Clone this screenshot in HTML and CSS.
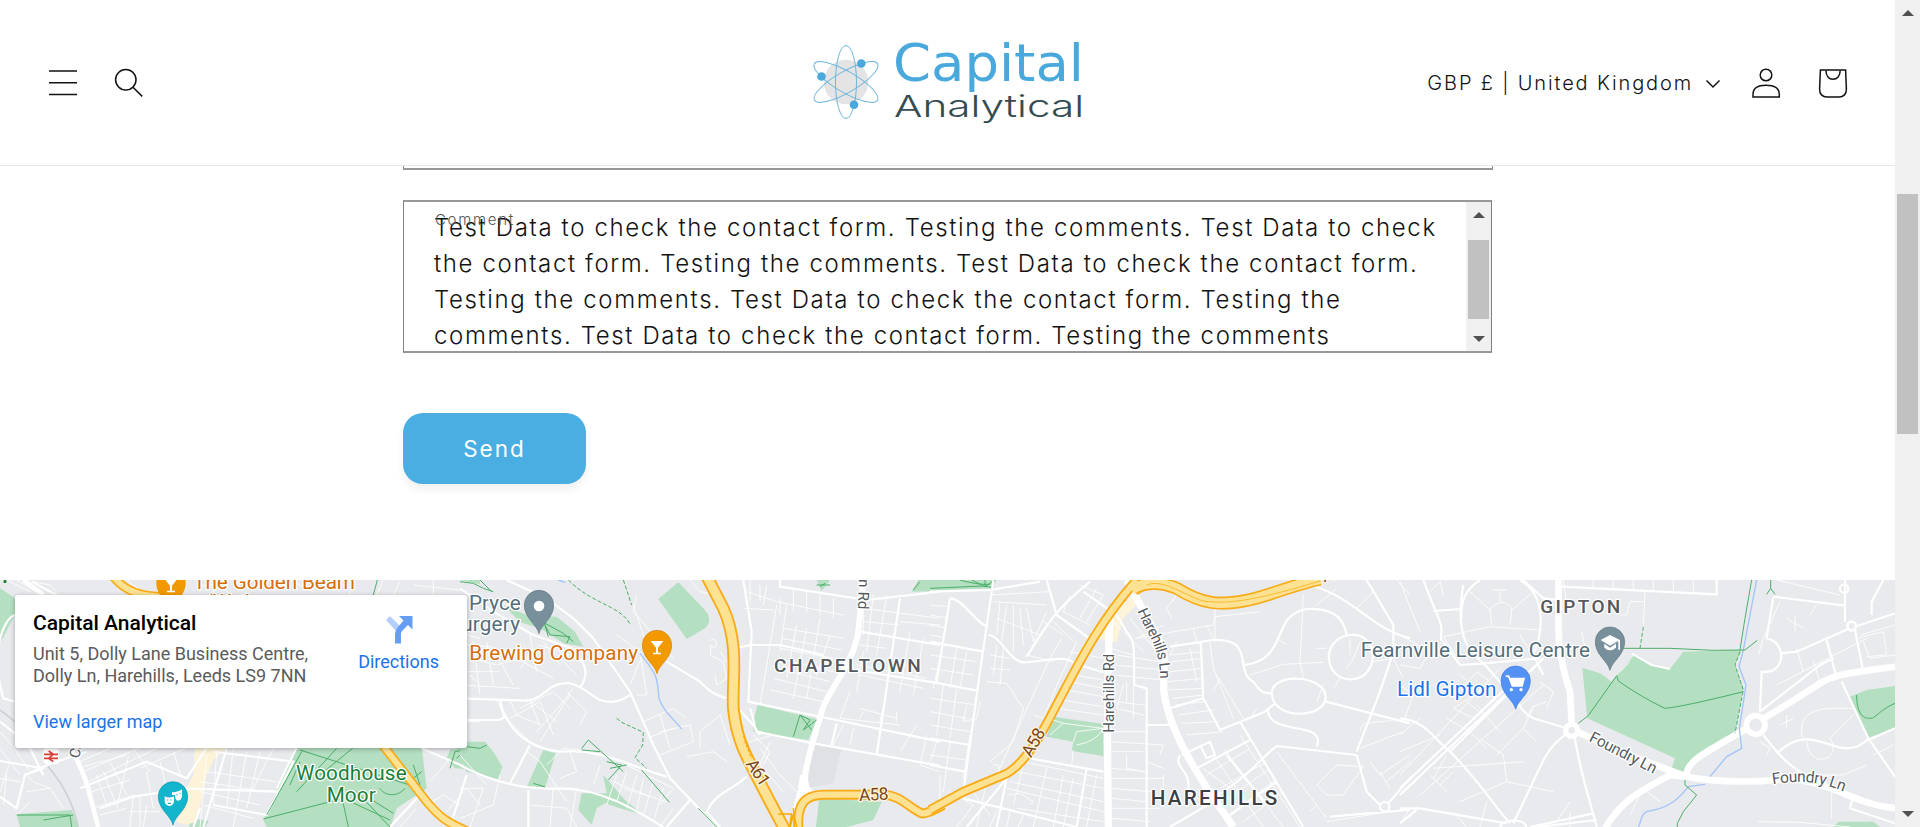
FILE: index.html
```html
<!DOCTYPE html>
<html lang="en">
<head>
<meta charset="utf-8">
<title>Capital Analytical – Contact</title>
<link rel="stylesheet" href="styles.css">
</head>
<body>
<div class="window">
<div class="page">
  <header class="header">
    <div class="header-left">
      <svg class="icon-menu" width="28" height="28" viewBox="0 0 28 28"><path d="M0 2h28M0 13.7h28M0 25.5h28"/></svg>
      <svg class="icon-search" width="30" height="30" viewBox="0 0 30 30"><circle cx="11.8" cy="11.8" r="10.2"/><path d="M19 19.2l9.2 9.2"/></svg>
    </div>
    <svg class="logo" width="280" height="90" viewBox="0 0 280 90">
      <circle cx="38" cy="44" r="22.3" fill="#e4e4e4"/>
      <g fill="none" stroke="#6db6dc" stroke-width="1">
        <ellipse cx="38" cy="44" rx="10.5" ry="36.5"/>
        <ellipse cx="38" cy="44" rx="10.5" ry="36.5" transform="rotate(60 38 44)"/>
        <ellipse cx="38" cy="44" rx="10.5" ry="36.5" transform="rotate(-60 38 44)"/>
      </g>
      <g fill="#49a9dc"><circle cx="53.3" cy="25.5" r="4.3"/><circle cx="13.5" cy="38.5" r="4.3"/><circle cx="46" cy="66.700" r="4.3"/></g>
      <text class="logo-top" x="85" y="43" textLength="191" lengthAdjust="spacingAndGlyphs">Capital</text>
      <text class="logo-bottom" x="86" y="79" textLength="190" lengthAdjust="spacingAndGlyphs">Analytical</text>
    </svg>
    <div class="header-right">
      <span class="currency">GBP £ | United Kingdom</span>
      <svg class="icon-chevron" width="16" height="10" viewBox="0 0 16 10"><path d="M1.5 1.5L8 8l6.5-6.5"/></svg>
      <svg class="icon-account" width="30" height="32" viewBox="0 0 30 32"><circle cx="15" cy="8" r="5.8"/><path d="M2 30V27.5C2 21.500 6 18.300 15 18.300S28.300 21.500 28.300 27.500V30Z"/></svg>
      <svg class="icon-bag" width="30" height="32" viewBox="0 0 30 32"><path d="M2.400 3H27.600L28.400 22C28.600 27 25.500 30 21 30H9C4.500 30 1.400 27 1.600 22Z"/><path d="M8 3.500C8 9 11 12.200 15 12.200S22.200 9 22.200 3.500"/></svg>
    </div>
  </header>
  <main class="contact">
    <div class="field-end"></div>
    <div class="field">
      <span class="field-label">Comment</span>
      <div class="field-text">
        <div>Test Data to check the contact form. Testing the comments. Test Data to check</div>
        <div>the contact form. Testing the comments. Test Data to check the contact form.</div>
        <div>Testing the comments. Test Data to check the contact form. Testing the</div>
        <div>comments. Test Data to check the contact form. Testing the comments</div>
      </div>
      <div class="bar field-bar"><i class="up"></i><i class="thumb"></i><i class="down"></i></div>
    </div>
    <button class="send">Send</button>
  </main>
  <section class="map">
    <svg class="map-canvas" width="1895" height="247" viewBox="0 580 1895 247">
      <defs>
        <path id="pin" d="M0 86C-6 58-44 40-44 0A44 44 0 1 1 44 0C44 40 6 58 0 86Z"/>
        <path id="glass" d="M-19-16H19L3 4V19H12V24H-12V19H-3V4Z" fill="#fff"/>
      </defs>
      <!-- west -->
      <g transform="translate(0 575) scale(.33333)">
        <path class="park" d="M0 40L45 70V120L0 205ZM890 515H1265L1280 640L1190 700L1172 756H800L790 735L835 640ZM50 718L215 705L235 756H60ZM1350 525L1440 505V585L1365 580L1340 550ZM570 730L627 738L615 756H568ZM1380 15H1440V28Z"/>
        <path class="shop" d="M585 518H680L640 555L620 600L590 740L555 750L530 740L550 660L580 600Z"/>
        <path class="mn" d="M0 470L40 515L90 590M0 520L60 600M30 560L0 650M240 560L330 520M250 590L420 518M265 620L470 520M275 650L390 615M385 545L350 700M330 560L380 660M400 520L450 590M420 580L560 518M440 590L460 700M480 560L500 640M520 530L545 610M250 575L380 540M290 600L320 690M310 590L345 680M280 700L400 660M300 720L380 700M620 540L600 756M650 530L640 690M700 520L680 700M740 530L700 756M780 530L740 700M820 520L760 640M600 620L800 650M600 650L780 690M610 690L760 730M620 590L830 620M0 610L60 620M20 600L10 690M70 590L100 620L150 640L190 700M80 650L150 640M90 680L50 720M400 660L390 756M420 665V756M440 690L430 756M390 710H480M1290 620L1350 550M1280 690L1330 660L1380 690M1340 710L1400 640L1440 690M1250 700L1200 756M20 15L90 50M50 15L110 50M100 20L150 30L170 50M380 15L420 45M600 30H660M680 15V55M880 20L940 50M1050 20V60M1150 15L1130 60M1200 20L1180 60M1300 15V60M1240 30L1380 45M1400 180L1440 190M1410 300L1440 330M1400 440H1440"/>
        <path d="M0 405L45 440M130 560C190 620 220 690 235 756" fill="none" stroke="#cdd0d4" stroke-width="5"/>
        <path class="rd" d="M45 380L10 370C-30 230 10 130 45 120M0 440L45 475L90 520L130 600M0 558L130 580L75 600L50 700L0 665M75 600L155 565L260 530M95 20L170 60M240 640L440 560L560 610L620 518M300 700L400 665L560 640L830 650M640 530L880 560L800 720L640 690M830 640L890 518M1265 520L1440 595M1400 600L1350 756M1170 756L1260 660M600 700L580 756M680 520L610 756"/>
        <path class="mj" d="M70 15L130 60M215 530C260 590 275 690 295 756"/>
        <path class="path" d="M900 525L1260 640M905 530L800 720M890 650L1010 520M900 560L870 630M1020 640L1045 756M1070 650L1170 756M1140 640C1150 660 1190 670 1215 640M1100 665L1180 715M1240 570L1260 630M1265 590L1240 610M790 732L1030 670L1170 735M1060 518L960 600M50 720H210L215 756M130 735L220 720M1120 60L1132 15M1350 580L1365 530L1440 515M1370 550L1410 510"/>
        <path class="oc" d="M340 5C380 55 430 62 480 65M1140 500L1280 680C1325 735 1350 745 1405 770"/><path class="oy" d="M340 5C380 55 430 62 480 65M1140 500L1280 680C1325 735 1350 745 1405 770"/>
        <rect x="130" y="520" width="46" height="48" rx="8" fill="#fff"/><path d="M132 538H174M132 550H174M146 528L160 538L146 550L160 560" fill="none" stroke="#d93f36" stroke-width="5"/>
        <text class="street" transform="translate(236 552) rotate(-75)" font-size="44">Ca</text>
        <path d="M15 15V24" stroke="#188038" stroke-width="8"/>
        <use href="#pin" x="513" y="24" fill="#f29900"/><use href="#glass" x="513" y="28"/>
        <g fill="#d56e0c"><text x="580" y="41" font-size="62" textLength="485">The Golden Beam</text><text x="620" y="103" font-size="62" textLength="225">(Wethers</text></g>
        <g fill="#188038"><text x="888" y="614" font-size="62" textLength="332">Woodhouse</text><text x="980" y="680" font-size="62" textLength="147">Moor</text></g>
        <use href="#pin" x="519" y="664" fill="#12b5cb" stroke="#0f95a8" stroke-width="2"/>
        <path fill="#fff" d="M494 664Q507 671 522 664V680Q518 693 508 693Q497 691 494 680ZM516 651Q532 654 546 643V662Q545 675 534 677Q525 677 525 660L516 660Z"/><path d="M501 675h4M511 675h4M529 659h4M539 656h3M503 684q5 4 10 0" stroke="#12b5cb" stroke-width="3"/>
      </g>
      <!-- north west -->
      <g transform="translate(460 575) scale(.33333)">
        <path class="park" d="M595 72L655 22L735 105Q760 135 735 160L680 192ZM892 390L1072 432L1045 495L880 470V440ZM130 90L200 120L290 125L345 170L370 215L310 205L250 165L180 140ZM0 500H75L100 530L127 575L115 612L20 590L0 550ZM250 525L287 535L255 638L202 632ZM430 600L495 675L550 720L480 700L435 685L410 700L395 750L355 705L365 655L440 655ZM1078 670L1170 675L1265 680L1240 735L1160 756H1068ZM1070 15H1110L1085 48ZM1375 15H1440V48L1355 50Z"/>
        <path d="M1060 510L1145 518L1120 625L1040 640Z" fill="#dfe1e5"/>
        <path class="mn" d="M20 210L90 215L130 230M30 250L110 270L180 250M20 290H120M40 200L60 360M80 200L100 330M110 240L160 330M0 330L180 340M150 220L200 250L260 215M210 180L230 290M250 200L300 270M170 250L280 310M180 280L240 210L330 240M280 230L350 300M110 375L150 440L210 500M150 375L170 420L240 450L210 380M200 370L290 440M180 400L280 350L330 400M150 430L240 380L280 480M230 470L310 380L340 340M240 500L330 360M320 350L380 410L360 450M520 90L560 210L510 330M470 180L540 230L560 360L530 360M550 440L640 400L680 430M600 420L630 520M600 540L700 500L690 450L600 470M560 490L640 460M680 545L760 530L800 560M720 520V470L780 420L810 510M530 60L520 110L640 250M750 200C750 190 770 190 770 205S755 220 752 210V240L790 260L800 310L770 330L765 300M800 260L780 230M690 15L720 50L780 60M900 390L910 330L950 90M860 50L950 80L1150 120M870 15V80M900 30V80M920 30L910 90M850 100L940 105M960 70V120M1000 40V110M1040 50V110M1080 60V120M1120 70V130M970 160L1150 190M965 190L1145 225M960 220L1120 250M955 250L1120 290M950 280L1110 320M940 310L1100 350M930 345L1090 380M980 90L960 230M1010 150L980 310M1040 160L1000 370M1080 130L1040 370M1110 180L1070 300M1210 60V180M1240 60L1220 230M1280 60L1250 240M1320 140L1440 150M1210 100L1440 130M1210 140L1320 150M1200 210L1280 220M1190 270L1400 310M1200 300L1390 340M1170 350L1140 430L1320 450M1210 230L1190 350M1350 170L1320 350M1390 190L1360 360M1200 400L1310 430M1210 410L1200 430M1270 400L1260 440M1310 410V440M1150 450L1120 510M1180 460L1170 510M1370 450L1320 530M1400 480L1380 570L1440 590M870 500L940 480M900 520L960 600L1010 650M930 500L900 570L970 650M880 480L930 530L910 570M460 620L560 660M470 600L440 690M500 590L470 680M530 600L500 700M550 610L530 710M580 620L550 720M610 640L580 740M500 570L640 640L600 690M490 640L620 680M640 700L600 756M400 530L310 520L260 570M330 530L350 590L300 610M420 570L400 630M0 640L70 640L30 756M120 600L100 690L0 730M210 690L320 700L350 756M280 640L270 756M350 640L330 756M200 530L240 560L320 680M0 540L80 630"/>
        <path class="rd" d="M0 370L200 377C260 370 260 320 330 325C400 345 400 385 460 380C500 375 500 360 515 360M0 435H115C140 430 130 420 120 375M120 390C150 470 210 520 300 530C420 520 500 570 620 605M210 510L150 625M205 645V756M0 570C100 625 200 645 300 640C420 640 520 700 610 756M140 15L260 70L340 130L400 190L510 350L580 510L630 610L770 756M340 240C400 270 370 330 360 335M0 40L100 110L220 180L350 225M620 260L720 320C760 360 770 360 800 370M835 218L870 210H960L1090 240M850 15L875 170L865 380L1440 500M960 15V35L1220 75L1440 50M870 400C890 450 880 460 890 470L1060 505L1440 572M1200 170L1440 210M1180 285L1440 325M1320 70L1250 540M1130 445L1115 510M740 710C770 650 810 650 860 605M740 710L780 756M690 675L620 756M830 395L880 450L900 480"/>
        <path class="mj" style="stroke-width:18" d="M1210 15L1195 170C1180 270 1100 350 1085 410C1070 460 1050 520 1035 600L1000 730"/>
        <path d="M1020 600L1045 600Q1040 650 1080 655L1020 690L1000 735Z" fill="#fff"/>
        <path class="water" d="M295 15L315 22M540 235C600 310 590 310 597 370C610 410 640 430 665 462"/>
        <path class="path" d="M0 20L40 25L70 40L100 50M60 15L95 50M250 140L270 180L330 185L320 205M255 145L310 175L340 200M265 185L255 150M365 520L385 495L490 590M365 525L420 530M440 560L485 570L445 615M450 580L500 570M545 585L628 682M715 700L770 756M220 625L255 636M20 515L60 520L80 510M1000 485L1020 420L1055 465M1020 420L1050 435L1030 465L1070 435M1070 30H1110M1080 35L1095 25M1360 45L1380 20M930 650L955 692"/>
        <path class="path dash" d="M325 15C400 90 480 90 512 150M490 15L515 90M470 430L485 442L550 472L548 510L525 548L560 580"/>
        <path class="oc" style="stroke-width:38" d="M738 0L790 100C840 210 815 320 820 400C830 500 850 530 975 765"/><path class="oy" style="stroke-width:27" d="M738 0L790 100C840 210 815 320 820 400C830 500 850 530 975 765"/>
        <path class="oc" style="stroke-width:30" d="M1015 760C1010 680 1040 660 1090 659H1270C1320 660 1350 700 1385 715C1400 717 1420 705 1450 690"/><path class="oy" style="stroke-width:19" d="M1015 760C1010 680 1040 660 1090 659H1270C1320 660 1350 700 1385 715C1400 717 1420 705 1450 690"/>
        <path d="M835 400L855 500L875 550" fill="none" stroke="#f9ab00" stroke-width="4" stroke-dasharray="10 4"/>
        <path d="M955 717H995L990 750M1000 720L990 756M1000 700C1000 730 1010 750 1010 756" fill="none" stroke="#f9ab00" stroke-width="5"/>
        <use href="#pin" x="237" y="90" fill="#78909c" stroke="#60757f" stroke-width="2"/><circle cx="237" cy="93" r="16" fill="#fff"/>
        <use href="#pin" x="591" y="210" fill="#f29900" stroke="#d58100" stroke-width="2"/><use href="#glass" x="591" y="214"/>
        <g fill="#546e7a"><text x="27" y="104" font-size="62" textLength="155">Pryce</text><text x="-34" y="168" font-size="62" textLength="214">Surgery</text></g>
        <text x="28" y="254" font-size="62" fill="#d56e0c" textLength="506">Brewing Company</text>
        <text class="area" x="942" y="291" textLength="440">CHAPELTOWN</text>
        <text class="street" transform="translate(1197 12) rotate(92)" font-size="45" textLength="91">n Rd</text>
        <text class="route" transform="translate(856 567) rotate(56)" textLength="85">A61</text>
        <text class="route" transform="translate(1198 678) rotate(-3)" textLength="88">A58</text>
      </g>
      <!-- harehills -->
      <g transform="translate(930 575) scale(.33333)">
        <path class="park" d="M0 15H200L185 40L0 47ZM370 425L520 447V543L425 528L430 500L350 485Z"/><path class="path" d="M0 40L160 33L190 38M125 15L165 35L195 15M165 15V35M90 15Q140 30 180 28"/><path class="shop" d="M525 110L545 105L610 60L625 85L580 130L560 200L490 190L470 230L455 215Z"/>
        <path class="mn" d="M0 90L60 95M0 120L50 128M0 150L45 158M0 180L45 188M0 240L140 260M0 280L130 300M30 250L10 340M80 220L60 340M110 230L90 340M0 370L140 390M0 410L110 430M40 330L20 480M80 340L60 490M110 390L100 440L140 430L150 380M0 450L120 470M20 500L0 560M60 500L40 650M120 480L100 610M0 540L110 555M30 600V680L0 690M180 60L360 50M190 80L350 90M210 80L200 180M230 90L215 200M250 90V230M270 100L280 210M290 100L310 200M200 130L330 180M350 110L310 200M340 140L400 180M360 130L430 200M290 240L370 260M420 60L400 110L480 150M450 30L520 60L470 140M500 40L450 130M395 190L360 250L200 600M440 200L390 310L340 430L310 420M200 210L190 300M220 220L210 330M180 240L240 250M180 280L240 285M170 320L230 325L280 400L250 500L180 560M190 570C220 560 200 600 220 610M420 230L520 250M430 300L520 315M420 320L520 340M410 345L520 365M395 375L520 395M380 400L520 420M540 180V220L610 240M550 140L640 230M600 130L680 230M620 190L700 150M560 240L690 260M550 270L700 285M550 300L700 315M580 330L560 400L640 420M610 330V430M590 320V380M550 380L645 390M545 470H650M545 500L700 510L690 540M545 530H640M590 540V580L640 590M545 580L650 590M545 610H700M545 640L660 650M545 670L650 680M545 700H690M545 730L660 740M700 600V640M650 560L700 580M720 240L820 230M725 260L820 250M720 290L820 280M710 320L820 310M715 345L820 340M730 370L820 360M735 390L830 380M745 420L850 405M755 445L865 440M770 480L880 470M840 200L850 280L910 430M860 300L940 430M870 310L850 350M780 220L800 320M740 200L720 240M615 190L850 150L855 125L990 110M855 95V200M790 160L800 200M830 150L850 190M740 60L710 100L725 130M280 560L520 610M260 590L520 640M240 620L520 680M230 640L520 710M280 570L250 690M350 580L310 756M400 600L370 756M430 610L400 756M500 600L470 756M230 660L270 655L310 680L300 690M260 700L520 740M200 710L180 756M240 710L230 756M280 720L265 756M60 650L130 690L80 756M120 640L180 720M170 620L140 756M820 580L900 640M850 540L1000 756M880 520L1060 756M930 480L1110 756M870 640L1010 560M880 680L1020 580M900 720L1040 610M940 740L1060 650M830 600L960 520M1040 530L1190 730M1160 630L1220 570L1300 575L1240 660L1190 660ZM980 400L960 430M1120 60L1110 260L1120 310M1040 190L1070 210M1190 220H1160M1290 200L1270 250L1250 280M1260 190V240M1180 330L1160 380M1230 310L1210 340M1330 260L1390 250L1420 310M1400 15L1440 60M1290 470C1290 430 1350 450 1400 430M1290 520L1420 470M1280 100L1330 50M1160 90L1220 40M960 300L1060 268L1180 262M1140 710L1160 690M1190 740L1440 700M1320 560L1350 600L1440 540M1370 620L1440 560M1350 590L1380 640"/>
        <path class="rd" d="M0 50L180 45L330 20M60 70L20 320M60 70C100 70 140 150 175 155M190 15L150 290L100 650M0 200L160 230M0 320L140 347M0 490L120 510M0 570L105 590M175 180C210 180 240 260 280 262C340 260 400 240 430 262M350 15L380 120L485 195M290 245C350 150 370 110 480 20M460 50L560 120L590 170C620 200 610 240 613 330L650 340V756M430 265L520 292M720 215L850 195C980 190 910 290 970 320C990 350 1000 355 1025 355M1000 355M945 270C1080 250 1020 120 1130 102C1200 100 1240 120 1250 180M1025 355C1025 290 1185 300 1187 365C1190 430 1030 440 1025 355M1188 380L1440 445M1260 180C1350 170 1350 310 1265 313C1180 315 1170 190 1260 180M1140 30C1280 70 1320 160 1440 190M1310 15L1390 150V230L1350 350L1280 530M1035 385L1005 410L870 465L820 370L812 200M1015 405C1010 470 1150 450 1160 485C1170 490 1160 510 1162 515M1280 540L1040 513C1000 540 950 620 810 690M1280 540L1310 650L1350 690M1200 725C1260 720 1300 715 1440 705M720 400L820 370M650 450H720M750 540C730 580 780 580 775 640M755 540L840 500L855 540L830 550L810 510M800 580L960 495M890 540L1010 690M930 440L1120 756M900 720L1040 620M720 756L850 680M100 670L440 756M90 650L230 610L200 756M300 550L520 590M230 610L110 756M470 580L440 756M1350 695A14 14 0 1 1 1378 695A14 14 0 1 1 1350 695M1375 685L1440 610"/>
        <path class="mj" style="stroke-width:22" d="M540 130C530 300 532 500 535 756M590 15L620 70L690 200C720 260 690 310 705 370C730 500 830 640 910 756"/>
        <path class="oc" style="stroke-width:29" d="M620 15C490 160 430 300 345 455C300 540 250 590 220 600L100 650L0 705"/><path class="oc" style="stroke-width:39" d="M610 45C640 20 690 20 740 40C820 90 870 90 940 78C1000 70 1070 35 1170 12"/>
        <path class="oy" style="stroke-width:18" d="M620 15C490 160 430 300 345 455C300 540 250 590 220 600L100 650L0 705"/><path class="oy" d="M605 45C640 20 690 20 740 40C820 90 870 90 940 78C1000 70 1070 35 1170 12" style="stroke-width:29"/>
        <path d="M650 30C700 10 760 60 820 78C900 90 1000 70 1170 18" fill="none" stroke="#f9bb2d" stroke-width="3"/>
        <path class="mn" d="M360 480L400 445L520 460M370 435L400 445M430 500L440 470L520 460M440 510Q500 500 520 460M430 525L425 570"/>
        <text class="street" transform="translate(553 473) rotate(-90)" font-size="45" textLength="237">Harehills Rd</text>
        <path id="lane" d="M622 108C660 195 690 215 690 318" fill="none"/><text class="street" font-size="45"><textPath href="#lane" textLength="217">Harehills Ln</textPath></text>
        <text class="route" transform="translate(303 550) rotate(-60)" textLength="90">A58</text>
        <text class="route" transform="translate(1182 22) rotate(-16)">A58</text>
        <text class="area town" x="662" y="689" textLength="380">HAREHILLS</text>
      </g>
      <!-- gipton -->
      <g transform="translate(1400 575) scale(.33333)">
        <path class="park" d="M547 278L600 295L635 320L705 238L755 270L810 282L850 230L1025 225L1005 270L1030 340L1005 475L900 535L850 590H812L825 550L562 430ZM1350 365L1400 345L1485 333V460L1405 488ZM1315 740H1420L1440 756H1300Z"/>
        <path class="mn" d="M0 20L60 170M90 50L120 20L130 60M210 50L270 105L275 150M330 150L335 105L400 50M270 105C290 75 325 75 335 105M300 50V85M275 45H320M130 185L270 155L415 165M130 185L180 260M360 180L410 260M180 300L240 350L160 400L220 430L290 360M160 370L230 290L270 320M200 380L250 420M140 430L210 470L260 520M0 480L60 430M0 530L120 480M0 600L300 280M60 660L430 330M100 580L370 560M140 540L100 610M160 590L120 630M90 600L140 650M180 680L320 620L460 650M320 620L310 540L240 490M230 390L300 470M290 540L370 460L400 400M440 400L460 350L420 320M370 460L410 500M400 395L440 380M380 430L400 390M490 15L500 90M545 170L555 220M580 15V40M640 15V45M700 15V45M760 15V50M820 15V50M880 15V50M735 50L730 155M660 120H680L690 80H730M1130 15L1320 60M1140 80L1090 190L1075 240M1160 130L1210 160M1185 120V170M1250 90L1230 120M1190 220L1210 290M1130 330L1400 190M1240 260L1260 320M1380 180L1485 150M1390 200L1410 250L1485 240M1210 500C1180 390 1280 400 1360 400M1220 500C1230 590 1330 550 1290 490L1360 420M1140 450L1180 430M1160 420V460M1420 540L1480 510M1180 600L1330 600L1400 570M1295 640V730M1075 740L1200 742L1350 756M660 290L690 260M740 650L780 680M720 660L690 720M30 700L0 750M160 710L200 756M260 680L240 756M510 710V756M470 740L510 680M0 180L90 230L60 280L0 270M0 330L40 360L10 440M0 645L80 560M1370 190L1450 170L1460 240L1400 245M1080 500L1110 520L1100 540"/>
        <path class="rd" d="M70 15C120 150 130 140 122 190L180 270L250 265M190 30C160 200 220 240 250 265L300 320C370 390 350 400 400 430L500 460M240 15C200 40 180 80 185 130M360 15C440 60 430 170 400 240L430 300M100 108L185 102M370 15L430 70L480 75M0 430C80 440 90 480 150 530C240 620 280 690 330 745M0 640L370 290M0 660L430 250M150 530L430 250M250 265L420 250M500 475C430 530 440 540 340 745M300 756C310 730 370 730 380 756M0 700H60L320 745M0 745L50 705M525 490C540 590 560 640 590 756M390 756L580 715M410 756L590 735M485 35L950 58V15M695 235L755 270L810 282M1120 65L1100 190C1160 200 1160 300 1085 290L1080 410M1120 65L1335 92M1335 15V140M1415 120V80L1450 15M1140 235L1190 230L1350 160L1485 115M1365 165L1390 290M1280 195L1310 310M1325 320L1405 490L1485 605M1405 495L1485 460M1080 410L1260 270L1300 250M1090 480C1150 560 1200 600 1260 620M1130 535C1220 450 1280 520 1340 520C1380 520 1390 500 1410 490M1360 660L1350 700L1485 745M1320 40A11 11 0 1 1 1345 42A11 11 0 1 1 1320 40"/>
        <path class="mj" style="stroke-width:20" d="M475 15C480 130 460 200 510 350L515 450M530 470L700 545L860 605C970 625 1080 620 1130 615C1280 600 1350 690 1490 700M860 600C860 560 900 540 1060 450L1190 370C1300 300 1280 300 1490 275M860 605L810 600C720 650 670 670 615 760"/>
        <circle cx="515" cy="466" r="18" class="ring" style="stroke-width:16"/><circle cx="1067" cy="450" r="28" class="ring" style="stroke-width:17"/><circle cx="1355" cy="153" r="13" class="ring" style="stroke-width:8"/>
        <path class="water" d="M1070 15L1030 225L1017 275L1038 330L1018 460L1025 520L980 545L930 605M915 628L865 635C830 680 800 700 740 710C720 720 725 740 715 756"/>
        <path class="path" d="M1055 15L1035 130L1020 225M670 220H810L940 226L1035 225L1072 196M535 445L565 422L650 302L655 318Q730 370 795 400Q850 395 1030 350M1112 15V40L1100 58M1112 40L1125 58M855 615V630L890 660L850 710L832 745V756M1370 360C1370 430 1400 430 1410 430C1430 430 1430 410 1485 385"/>
        <path class="path dash" d="M730 156L720 220M1020 230L1005 270L1030 345L1005 475"/>
        <use href="#pin" x="630" y="200" fill="#78909c" stroke="#60757f" stroke-width="2"/><path fill="#fff" d="M630 180L602 195L630 212L655 198V224H660V195ZM613 206V218Q630 234 648 218V206L630 218Z"/>
        <use href="#pin" x="347" y="317" fill="#5491f5" stroke="#427fdf" stroke-width="2"/><path d="M317 303H326L337 333H366L372 311H330" fill="#fff" stroke="#fff" stroke-width="5"/><circle cx="334" cy="344" r="5" fill="#fff"/><circle cx="363" cy="344" r="5" fill="#fff"/>
        <text class="area" x="421" y="113" textLength="240">GIPTON</text>
        <text x="-118" y="246" font-size="62" fill="#546e7a" textLength="688">Fearnville Leisure Centre</text>
        <text x="-9" y="362" font-size="62" fill="#1a73e8" textLength="298">Lidl Gipton</text>
        <text class="street" transform="translate(565 497) rotate(27)" font-size="47" textLength="220">Foundry Ln</text>
        <path id="foundry" d="M1118 628C1200 616 1250 615 1345 655" fill="none"/><text class="street" font-size="47"><textPath href="#foundry" textLength="218">Foundry Ln</textPath></text>
      </g>
    </svg>
    <div class="place">
      <div class="place-info">
        <h2>Capital Analytical</h2>
        <p>Unit 5, Dolly Lane Business Centre,<br>Dolly Ln, Harehills, Leeds LS9 7NN</p>
        <a>View larger map</a>
      </div>
      <div class="directions">
        <svg width="28" height="28" viewBox="0 0 28 28"><path d="M1 4L5 0L15 10L11 15Z" fill="#b5cefb"/><path d="M14 0H27.500V13.500L23 9L17 15Q16 16.500 16 18V27.500H10V18Q10 14 13 11L18.500 4.500Z" fill="#669df6"/></svg>
        <span>Directions</span>
      </div>
    </div>
  </section>
</div>
<div class="bar page-bar"><i class="up"></i><i class="thumb"></i><i class="down"></i></div>
</div>
</body>
</html>
```
FILE: styles.css
```css
* { box-sizing: border-box; }
body { margin: 0; background: #fff; color: #121212; font-family: Inter, "Open Sans", sans-serif; overflow: hidden; }
.window { display: flex; width: 1920px; height: 827px; }
.page { width: 1895px; display: flex; flex-direction: column; }

.header { height: 166px; flex: none; display: grid; grid-template-columns: 1fr 280px 1fr; align-items: center; border-bottom: 1px solid #e8e8e8; }
.header svg { display: block; }
.header-left { display: flex; align-items: center; padding-left: 49px; gap: 37px; }
.header-left path, .header-left circle, .header-right path, .header-right circle { fill: none; stroke: #121212; stroke-width: 1.5; }
.header-right { display: flex; align-items: center; justify-content: flex-end; padding-right: 47px; }
.currency { font-size: 20px; font-weight: 300; letter-spacing: 1.85px; white-space: nowrap; }
.icon-chevron { margin: 3px 30px 0 12px; }
.icon-bag { margin-left: 37px; }
.logo-top { font: 400 51px "DejaVu Sans", sans-serif; fill: #49a9dc; }
.logo-bottom { font: 300 30px Inter, sans-serif; fill: #344c51; }

.contact { height: 414px; flex: none; padding-left: 403px; }
.field-end { width: 1090px; height: 4px; border: 1px solid #858585; border-top: 0; border-bottom-width: 2px; border-bottom-color: #989898; }
.field { position: relative; display: flex; justify-content: space-between; width: 1089px; height: 153px; margin-top: 30px; border: solid #808080; border-width: 2px 1px; border-top-color: #989898; border-bottom-color: #989898; overflow: hidden; }
.field-label { position: absolute; left: 31px; top: 8px; font-size: 15px; line-height: 20px; font-weight: 300; letter-spacing: 1.7px; color: #555; }
.field-text { padding: 8px 0 0 30px; font-size: 24px; line-height: 36px; font-weight: 300; letter-spacing: 1.63px; white-space: nowrap; }
.send { display: block; width: 183px; height: 71px; margin-top: 60px; border: 0; border-radius: 20px; background: #4aaee3; color: #fff; font: 400 22.5px Inter, sans-serif; letter-spacing: 2px; box-shadow: 0 6px 8px rgba(18,18,18,.06); }

.bar { flex: none; width: 25px; display: flex; flex-direction: column; align-items: center; background: #f0f0f0; }
.bar i { display: block; }
.up { border: 6px solid transparent; border-top: 0; border-bottom-color: #505050; }
.down { border: 6px solid transparent; border-bottom: 0; border-top-color: #505050; }
.thumb { width: 21px; background: #c1c1c1; }
.field-bar { justify-content: space-between; padding: 10px 0 9px; }
.field-bar .thumb { height: 79px; margin-top: 4px; }
.page-bar { height: 827px; padding-top: 10px; }
.page-bar .thumb { height: 240px; margin: 178px 0 377px; }

.map { position: relative; height: 247px; flex: none; background: #e8eaed; overflow: hidden; }
.map-canvas { display: block; font-family: Roboto, sans-serif; }
.map-canvas text { paint-order: stroke; stroke: #fff; stroke-width: 8px; stroke-linejoin: round; }
.park { fill: #b4dfc1; }
.shop { fill: #fdf3d9; }
.mn, .rd, .mj, .path, .water, .oc, .oy, .ring { fill: none; stroke: #fff; stroke-linejoin: round; }
.mn { stroke-width: 3; opacity: .85; }
.rd { stroke-width: 6.500px; }
.mj { stroke-width: 14px; }
.ring { fill: #e8eaed; }
.map-canvas .path { stroke: #4bae68; stroke-width: 3; }
.dash { stroke-dasharray: 12 6; }
.water { stroke: #a2c4fa; stroke-width: 4; }
.oc { stroke: #f9ab17; stroke-width: 28px; }
.oy { stroke: #fde293; stroke-width: 18px; }
.area { font-size: 57px; font-weight: 500; fill: #55595e; }
.town { font-size: 62px; fill: #3c4043; }
.street { fill: #55595e; }
.route { font-size: 52px; fill: #794516; }
.map-canvas .route { stroke: #fff5df; }

.place { position: absolute; left: 15px; top: 15px; width: 452px; height: 153px; padding: 15px 28px 0 18px; display: flex; justify-content: space-between; background: #fff; border-radius: 3px; box-shadow: 0 1px 5px rgba(0,0,0,.3); font-family: Roboto, sans-serif; }
.place h2 { margin: 0; font-size: 21px; line-height: 26px; font-weight: 500; color: #000; white-space: nowrap; }
.place p { margin: 7px 0 0; font-size: 18px; line-height: 22px; color: #5b5b5b; white-space: nowrap; }
.place a { display: block; margin-top: 24px; font-size: 18px; line-height: 22px; color: #1a73e8; }
.directions { display: flex; flex-direction: column; align-items: center; padding-top: 6px; font-size: 18px; line-height: 22px; color: #1a73e8; }
.directions span { margin-top: 7px; }
```
